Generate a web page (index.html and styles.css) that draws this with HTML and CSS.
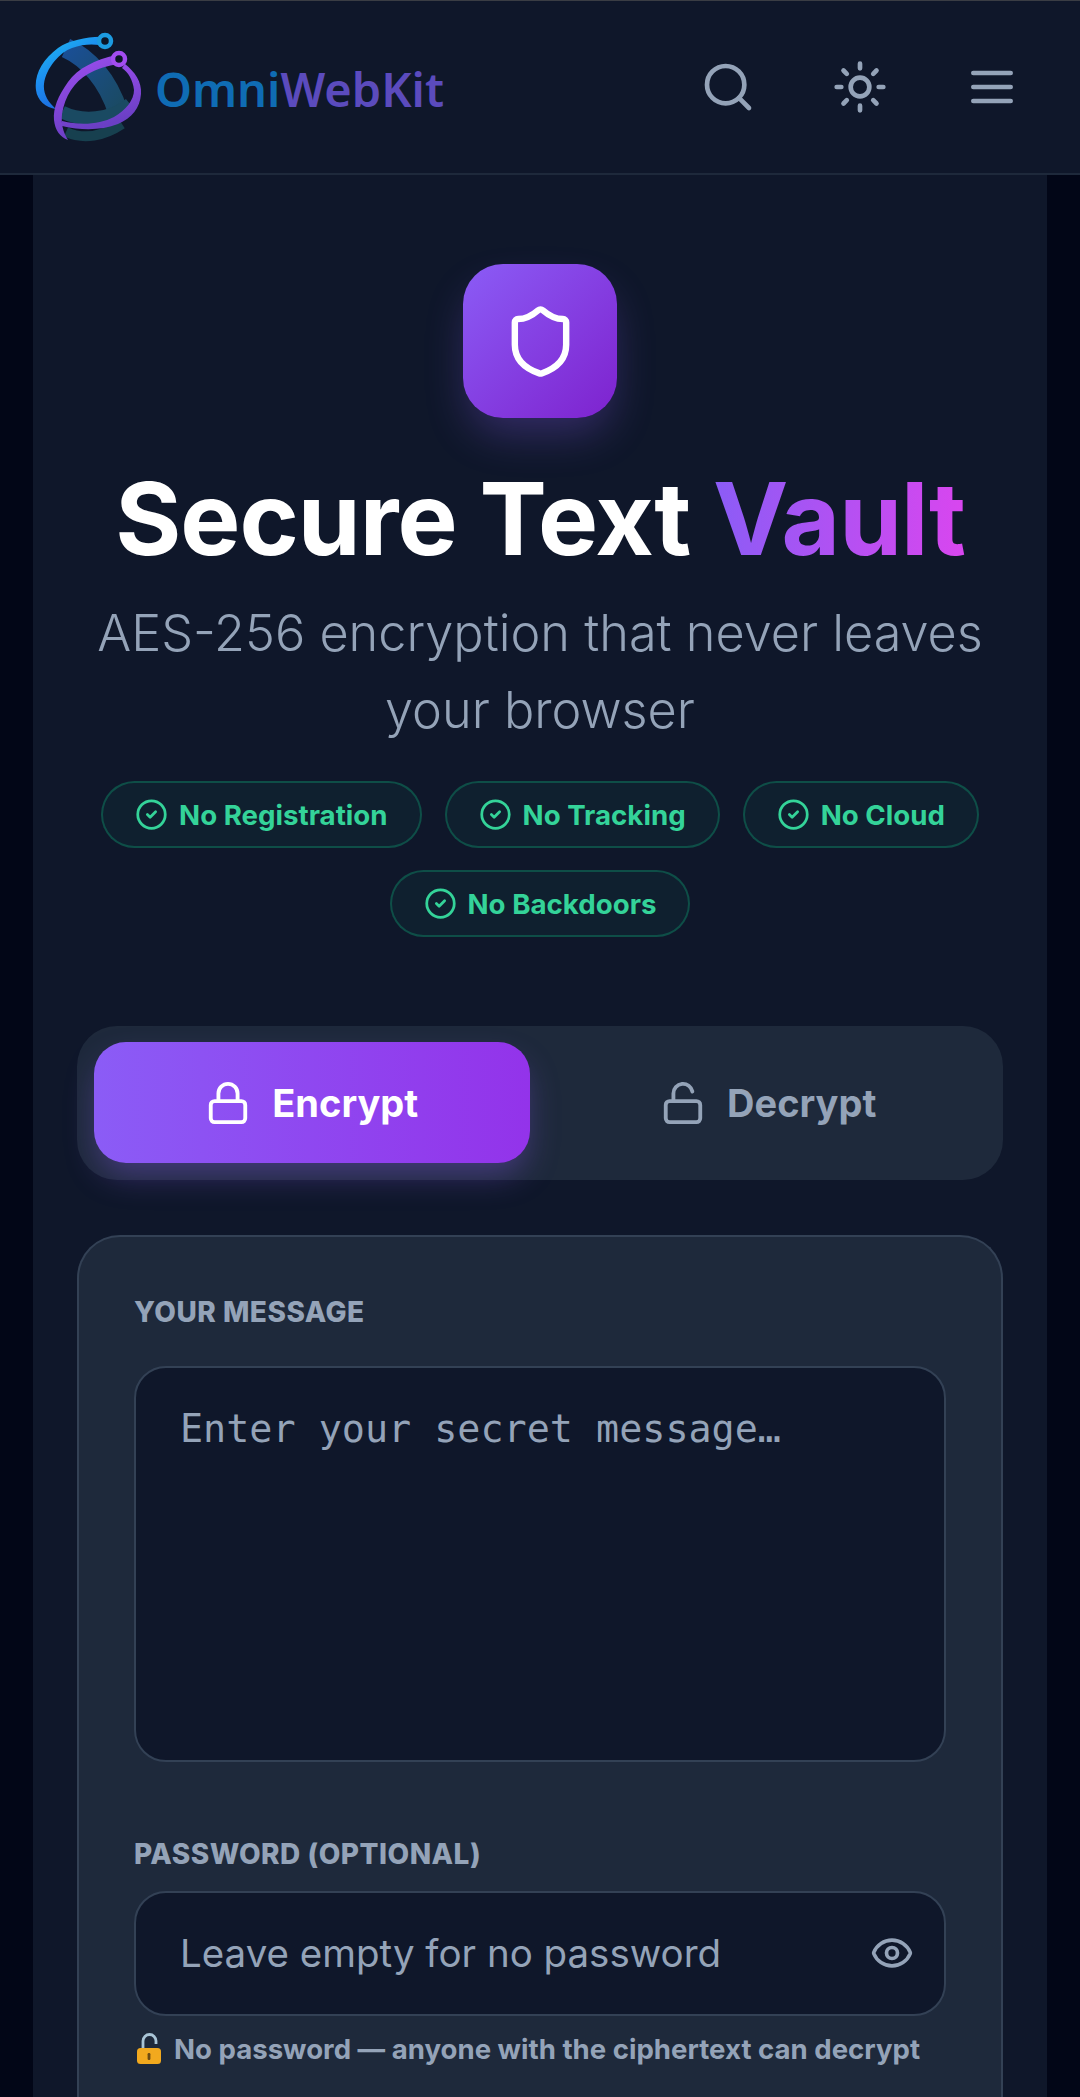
FILE: index.html
```html
<!DOCTYPE html>
<html lang="en">
<head>
    <meta charset="UTF-8">
    <meta name="viewport" content="width=device-width, initial-scale=1.0">
    <title>Secure Text Vault</title>
    <link rel="stylesheet" href="styles.css">
</head>
<body>
    <header class="topbar">
        <a class="brand" href="#">
            <svg class="brand-mark" viewBox="35 30 110 115" fill="none">
                <defs>
                    <linearGradient id="ringBlue" x1="0" y1="0" x2="0.6" y2="1">
                        <stop offset="0" stop-color="#1fc0f0"/>
                        <stop offset="0.5" stop-color="#1c8cf0"/>
                        <stop offset="1" stop-color="#1d5fd8"/>
                    </linearGradient>
                    <linearGradient id="ringPurple" x1="0" y1="0" x2="0.3" y2="1">
                        <stop offset="0" stop-color="#a14ff2"/>
                        <stop offset="1" stop-color="#6a3fc4"/>
                    </linearGradient>
                    <linearGradient id="band" x1="0" y1="0" x2="1" y2="1">
                        <stop offset="0" stop-color="#1a4f96"/>
                        <stop offset="1" stop-color="#1a4a62"/>
                    </linearGradient>
                </defs>
                <path d="M66 48C88 58 108 80 118 112" stroke="url(#band)" stroke-width="20"/>
                <path d="M62 112C82 122 110 120 130 104" stroke="#1a4a62" stroke-width="13"/>
                <path d="M66 132C84 140 104 136 122 124" stroke="#17404f" stroke-width="10"/>
                <path d="M105 37C90 36 70 40 58 48C42 60 34 75 36 90C37 100 46 108 56 109C48 102 43 94 44 84C46 68 60 52 72 48C82 44 92 44 100 45Z" fill="url(#ringBlue)"/>
                <circle cx="105" cy="41" r="6" fill="#0b1526" stroke="#1c9be0" stroke-width="4.5"/>
                <path d="M116 55C95 60 78 68 68 82C58 96 53 108 54 120C55 130 60 137 68 140C63 132 61 124 62 114C65 96 74 82 88 74C98 68 108 66 118 64Z" fill="url(#ringPurple)"/>
                <path d="M125 64C135 72 142 82 141 94C140 108 132 118 118 124C102 130 84 131 62 126L62 121C82 126 100 124 114 117C126 110 134 100 134 90C133 80 128 72 122 68Z" fill="url(#ringPurple)"/>
                <circle cx="119" cy="59" r="6" fill="#0b1526" stroke="#a24cf0" stroke-width="4.5"/>
            </svg>
            <span class="brand-name"><span class="brand-omni">Omni</span><span class="brand-kit">WebKit</span></span>
        </a>
        <nav class="topbar-icons">
            <button class="icon-btn" aria-label="Search">
                <svg viewBox="0 0 24 24" width="56" height="56" fill="none" stroke="#94a3b8" stroke-width="2" stroke-linecap="round">
                    <circle cx="11" cy="11" r="8"/><path d="m21 21-4.3-4.3"/>
                </svg>
            </button>
            <button class="icon-btn" aria-label="Theme">
                <svg viewBox="0 0 24 24" width="56" height="56" fill="none" stroke="#94a3b8" stroke-width="2" stroke-linecap="round">
                    <circle cx="12" cy="12" r="4"/>
                    <path d="M12 2v2M12 20v2M4.93 4.93l1.41 1.41M17.66 17.66l1.41 1.41M2 12h2M20 12h2M6.34 17.66l-1.41 1.41M19.07 4.93l-1.41 1.41"/>
                </svg>
            </button>
            <button class="icon-btn" aria-label="Menu">
                <svg viewBox="0 0 24 24" width="56" height="56" fill="none" stroke="#94a3b8" stroke-width="2" stroke-linecap="round">
                    <path d="M4 6h16M4 12h16M4 18h16"/>
                </svg>
            </button>
        </nav>
    </header>

    <main class="vault">
        <div class="hero-icon">
            <svg viewBox="0 0 24 24" width="77" height="77" fill="none" stroke="#fff" stroke-width="2" stroke-linecap="round" stroke-linejoin="round">
                <path d="M20 13c0 5-3.5 7.5-7.66 8.95a1 1 0 0 1-.67-.01C7.5 20.5 4 18 4 13V6a1 1 0 0 1 1-1c2 0 4.5-1.2 6.24-2.72a1.17 1.17 0 0 1 1.52 0C14.51 3.81 17 5 19 5a1 1 0 0 1 1 1z"/>
            </svg>
        </div>
        <h1 class="title">Secure Text <span class="title-accent">Vault</span></h1>
        <p class="subtitle">AES-256 encryption that never leaves your browser</p>

        <div class="chips">
            <span class="chip">
                <svg viewBox="0 0 24 24" class="chip-check" fill="none" stroke="#34d399" stroke-width="2" stroke-linecap="round" stroke-linejoin="round"><circle cx="12" cy="12" r="10"/><path d="m9 12 2 2 4-4"/></svg>
                No Registration
            </span>
            <span class="chip">
                <svg viewBox="0 0 24 24" class="chip-check" fill="none" stroke="#34d399" stroke-width="2" stroke-linecap="round" stroke-linejoin="round"><circle cx="12" cy="12" r="10"/><path d="m9 12 2 2 4-4"/></svg>
                No Tracking
            </span>
            <span class="chip">
                <svg viewBox="0 0 24 24" class="chip-check" fill="none" stroke="#34d399" stroke-width="2" stroke-linecap="round" stroke-linejoin="round"><circle cx="12" cy="12" r="10"/><path d="m9 12 2 2 4-4"/></svg>
                No Cloud
            </span>
            <span class="chip">
                <svg viewBox="0 0 24 24" class="chip-check" fill="none" stroke="#34d399" stroke-width="2" stroke-linecap="round" stroke-linejoin="round"><circle cx="12" cy="12" r="10"/><path d="m9 12 2 2 4-4"/></svg>
                No Backdoors
            </span>
        </div>

        <div class="tabs">
            <button class="tab active">
                <svg viewBox="0 0 24 24" width="46" height="46" fill="none" stroke="currentColor" stroke-width="2" stroke-linecap="round" stroke-linejoin="round"><rect x="3" y="11" width="18" height="11" rx="2"/><path d="M7 11V7a5 5 0 0 1 10 0v4"/></svg>
                Encrypt
            </button>
            <button class="tab">
                <svg viewBox="0 0 24 24" width="46" height="46" fill="none" stroke="currentColor" stroke-width="2" stroke-linecap="round" stroke-linejoin="round"><rect x="3" y="11" width="18" height="11" rx="2"/><path d="M7 11V7a5 5 0 0 1 9.9-1"/></svg>
                Decrypt
            </button>
        </div>

        <section class="card">
            <label class="field-label" for="message">Your Message</label>
            <textarea id="message" class="message" placeholder="Enter your secret message…"></textarea>

            <label class="field-label password-label" for="password">Password (Optional)</label>
            <div class="password-wrap">
                <input id="password" class="password" type="text" placeholder="Leave empty for no password">
                <svg class="eye" viewBox="0 0 24 24" width="44" height="44" fill="none" stroke="#94a3b8" stroke-width="2" stroke-linecap="round" stroke-linejoin="round"><path d="M2.06 12.35a1 1 0 0 1 0-.7 10.75 10.75 0 0 1 19.88 0 1 1 0 0 1 0 .7 10.75 10.75 0 0 1-19.88 0"/><circle cx="12" cy="12" r="3"/></svg>
            </div>
            <p class="hint">
                <svg class="hint-lock" viewBox="0 0 26 32">
                    <path d="M7 17V8a6.5 6.5 0 0 1 13 0v3" fill="none" stroke="#a9c4d6" stroke-width="2.8"/>
                    <rect x="1" y="15" width="24" height="16" rx="3.5" fill="#f2a91e"/>
                    <rect x="11.6" y="20" width="2.8" height="7" rx="1.2" fill="#6b4a12"/>
                </svg>
                No password — anyone with the ciphertext can decrypt
            </p>
        </section>
    </main>
</body>
</html>
```

FILE: styles.css
```css
* {
    box-sizing: border-box;
}
html, body {
    height: 100%;
}
body {
    margin: 0;
    height: 2097px;
    overflow: hidden;
    background: #020617;
    font-family: Inter, "Liberation Sans", sans-serif;
    color: #94a3b8;
}

/* top bar */
.topbar {
    height: 175px;
    display: flex;
    align-items: center;
    justify-content: space-between;
    padding: 0 60px 0 35px;
    background: #0f172a;
    border-top: 1px solid #3a3d44;
    border-bottom: 2px solid #1e293b;
}
.brand {
    display: flex;
    align-items: center;
    gap: 10px;
    text-decoration: none;
}
.brand-mark {
    width: 110px;
    height: 115px;
}
.brand-name {
    font-family: "Noto Sans", sans-serif;
    font-size: 47px;
    font-weight: 600;
    margin-top: 3px;
}
.brand-omni {
    color: #0f6cb4;
}
.brand-kit {
    color: #5b4bbd;
}
.topbar-icons {
    display: flex;
    gap: 76px;
    align-items: center;
}
.icon-btn {
    width: 56px;
    height: 56px;
    padding: 0;
    border: 0;
    background: none;
}
.icon-btn svg {
    display: block;
}

/* page column */
.vault {
    margin: 0 33px;
    height: 1922px;
    padding: 89px 44px 0;
    background: #0f172a;
    display: flex;
    flex-direction: column;
    align-items: center;
}
.hero-icon {
    width: 154px;
    height: 154px;
    border-radius: 40px;
    display: flex;
    align-items: center;
    justify-content: center;
    background: linear-gradient(135deg, #8b5cf6, #7e22ce);
    box-shadow: 0 21px 43px -6px rgba(139, 92, 246, 0.3);
}
.title {
    margin: 42px -40px 0;
    font-size: 101px;
    line-height: 116px;
    font-weight: 700;
    color: #fff;
    letter-spacing: -1px;
    white-space: nowrap;
}
.title-accent {
    background: linear-gradient(90deg, #8b5cf6, #d946ef);
    -webkit-background-clip: text;
    background-clip: text;
    color: transparent;
}
.subtitle {
    margin: 18px -10px 0;
    font-size: 50.4px;
    line-height: 77px;
    font-weight: 300;
    text-align: center;
    color: #94a3b8;
}

/* feature chips */
.chips {
    margin: 33px -8px 0;
    display: flex;
    flex-wrap: wrap;
    justify-content: center;
    gap: 22px 23px;
}
.chip {
    height: 67px;
    display: inline-flex;
    align-items: center;
    gap: 11px;
    padding: 0 32px;
    border-radius: 34px;
    font-size: 27.7px;
    font-weight: 700;
    color: #34d399;
    background: rgba(16, 185, 129, 0.06);
    border: 2px solid rgba(16, 185, 129, 0.3);
}
.chip-check {
    width: 33px;
    height: 33px;
}

/* encrypt / decrypt switch */
.tabs {
    width: 100%;
    margin-top: 89px;
    padding: 16px 17px 17px;
    display: flex;
    gap: 21px;
    height: 154px;
    background: #1e293b;
    border-radius: 40px;
}
.tab {
    flex: 1;
    display: flex;
    align-items: center;
    justify-content: center;
    gap: 21px;
    border: 0;
    background: none;
    border-radius: 32px;
    font-family: inherit;
    font-size: 38px;
    font-weight: 700;
    color: #94a3b8;
}
.tab.active {
    color: #fff;
    background: linear-gradient(90deg, #8b5cf6, #9333ea);
    box-shadow: 0 16px 32px -4px rgba(139, 92, 246, 0.35);
}

/* form card */
.card {
    width: 100%;
    margin-top: 55px;
    flex: 1;
    padding: 57px 55px 0;
    background: #1e293b;
    border: 2px solid #334155;
    border-bottom: 0;
    border-radius: 43px 43px 0 0;
}
.field-label {
    display: block;
    font-size: 28px;
    line-height: 36px;
    font-weight: 800;
    letter-spacing: 0.5px;
    text-transform: uppercase;
    color: #94a3b8;
}
.message {
    display: block;
    width: 100%;
    height: 396px;
    margin-top: 36px;
    padding: 38px 44px;
    background: #0f172a;
    border: 2px solid #334155;
    border-radius: 32px;
    font-family: "DejaVu Sans Mono", monospace;
    font-size: 38.4px;
    resize: none;
    outline: none;
}
.message::placeholder,
.password::placeholder {
    color: #94a3b8;
    opacity: 1;
}
.password-label {
    margin-top: 74px;
}
.password-wrap {
    position: relative;
    margin-top: 19px;
}
.password {
    display: block;
    width: 100%;
    height: 125px;
    padding: 0 110px 2px 44px;
    background: #0f172a;
    border: 2px solid #334155;
    border-radius: 32px;
    font-family: inherit;
    font-size: 38.5px;
    outline: none;
}
.eye {
    position: absolute;
    right: 32px;
    top: 40px;
}
.hint {
    margin: 15px 0 0;
    display: flex;
    align-items: center;
    gap: 12px;
    font-size: 27.6px;
    line-height: 36px;
    font-weight: 700;
    color: #94a3b8;
}
.hint-lock {
    width: 26px;
    height: 32px;
    margin-left: 2px;
}
```
